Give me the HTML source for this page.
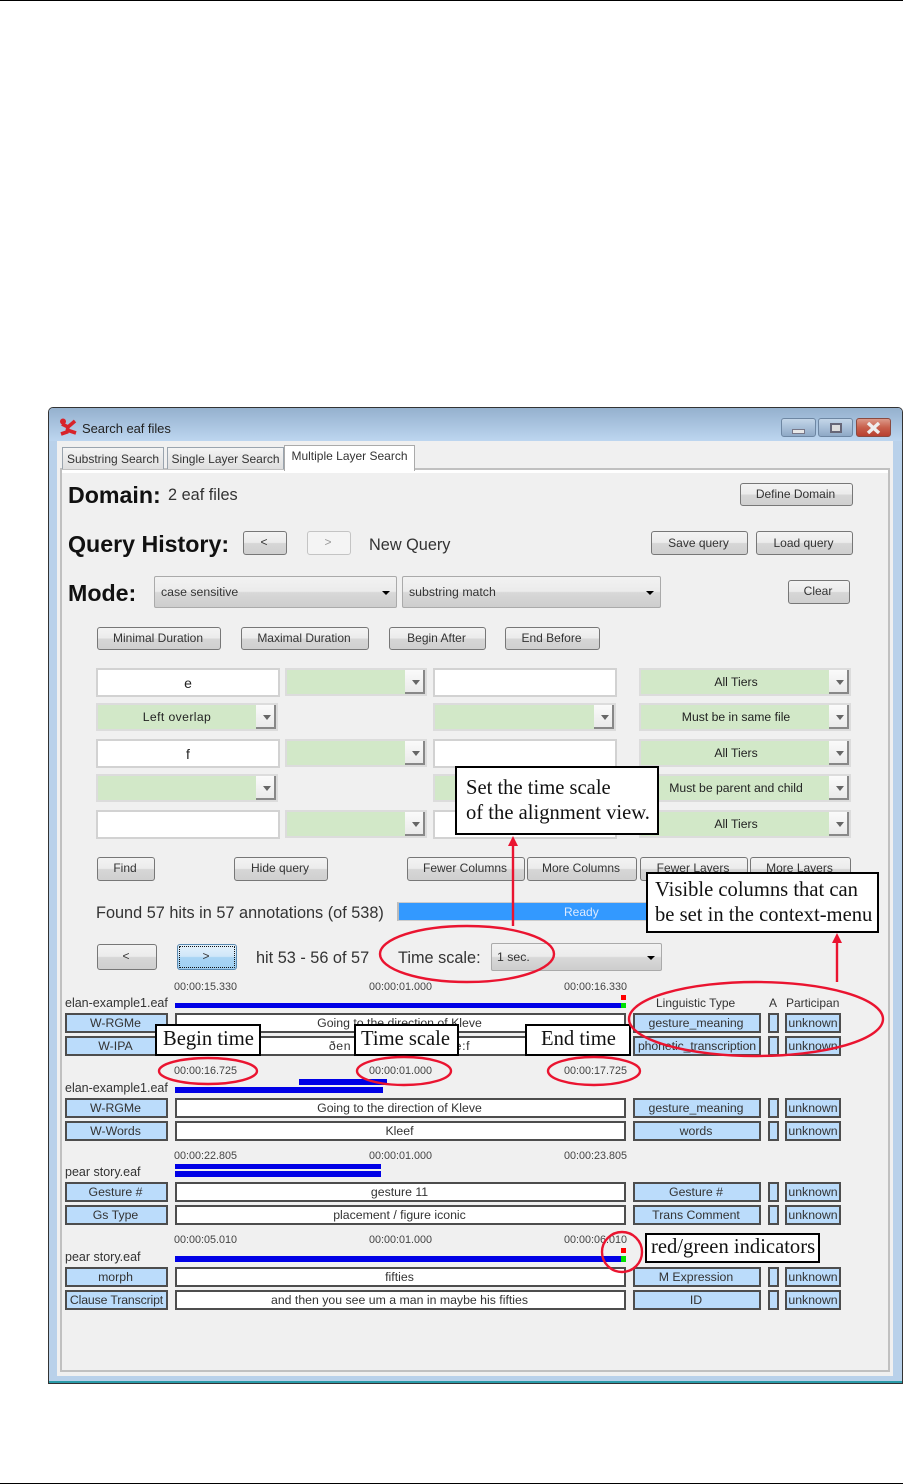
<!DOCTYPE html>
<html><head><meta charset="utf-8"><style>
html,body{margin:0;padding:0;background:#fff}
#p{position:relative;width:903px;height:1484px;overflow:hidden;background:#fff;font:12px "Liberation Sans",sans-serif;color:#222;filter:blur(.3px)}
#p div{position:absolute;box-sizing:border-box;white-space:nowrap}
.b{display:flex;align-items:center;justify-content:center;border:1px solid #777;border-radius:3px;background:linear-gradient(#f3f3f3 0,#ebebeb 48%,#d6d6d6 52%,#cfcfcf 100%);color:#333;font-size:12px;padding:0 2px 2px 0}
.s{border:1px solid #aaa;border-radius:2px;background:linear-gradient(#f2f2f2 0,#ebebeb 48%,#d8d8d8 52%,#cdcdcd 100%);padding-left:6px;display:flex;align-items:center;color:#333;font-size:12.3px}
.s:after{content:"";position:absolute;right:6px;top:50%;margin-top:-1px;border:4px solid transparent;border-top:4px solid #000;border-bottom:0}
.i{background:#fff;border:2px solid #d2d2d2;display:flex;align-items:center;justify-content:center;font-size:14px;color:#222}
.g{background:#d2e8c8;border:2px solid #dcdcdc;display:flex;align-items:center;justify-content:center;padding-right:18px;color:#222;font-size:12.2px}
.g:after{content:"";position:absolute;right:0;top:0;bottom:0;width:18px;background:linear-gradient(#fafafa,#eaeaea);border-right:2px solid #888;border-bottom:2px solid #888}
.g:before{content:"";position:absolute;z-index:1;right:5px;top:50%;margin-top:-2px;border:4px solid transparent;border-top:5px solid #666;border-bottom:0}
.l,.w{display:flex;align-items:center;justify-content:center;border:2px solid #4d4d4d;color:#333;height:20px;font-size:12.3px;padding-right:2px}
.l{background:#bbdcfb}
.w{background:#fff}
.t{font-size:10.8px;color:#444}
.f{color:#333;font-size:12.5px}
.f2{color:#333;font-size:12px}
.h{font-weight:bold;font-size:23.2px;color:#111}
.n{font-size:16.3px;color:#333}
.c{background:#fff;border:2px solid #000;font-family:"Liberation Serif",serif;font-size:20.6px;color:#111;line-height:25px;z-index:5}
.tab{display:flex;align-items:center;justify-content:center;border:1px solid #9aa4ae;border-bottom:0;background:linear-gradient(#f4f4f4,#dedede);color:#333;font-size:12px}
.bl{background:#0000e6}
</style></head><body><div id="p">
<div style="left:0;top:0;width:903px;height:1px;background:#000"></div>
<div style="left:0;top:1483px;width:903px;height:1px;background:#000"></div>

<!-- window -->
<div style="left:48px;top:407px;width:855px;height:977px;background:#b9d1ea;border:1px solid #333;border-radius:5px 5px 0 0"></div>
<div style="left:49px;top:408px;width:853px;height:33px;background:linear-gradient(#95b1ce,#bdd6f0);border-radius:4px 4px 0 0"></div>
<div style="left:49px;top:1381px;width:853px;height:2px;background:#2a9aa8"></div>
<div style="left:57px;top:441px;width:836px;height:935px;background:#f0f0f0"></div>
<svg style="position:absolute;left:59px;top:418px" width="20" height="19" viewBox="0 0 20 19"><path d="M3 6 L9 9 L16 3 M9 9 L8 14 L2 16 M8 12 L17 15" stroke="#d8232a" stroke-width="3.6" fill="none"/><circle cx="4" cy="3.5" r="3" fill="#d8232a"/></svg>
<div style="left:82px;top:421px;font-size:13px;color:#222;letter-spacing:-.05px">Search eaf files</div>
<!-- window controls -->
<div style="left:781px;top:418px;width:35px;height:19px;border:1px solid #6e87a3;border-radius:3px;background:linear-gradient(#c4d6e8,#a9c0d8 50%,#8fa9c6)"></div>
<div style="left:792px;top:429px;width:13px;height:5px;background:#e8e8e8;border:1px solid #778"></div>
<div style="left:818px;top:418px;width:35px;height:19px;border:1px solid #6e87a3;border-radius:3px;background:linear-gradient(#c4d6e8,#a9c0d8 50%,#8fa9c6)"></div>
<div style="left:830px;top:423px;width:12px;height:10px;background:#ddd;border:2px solid #667"></div>
<div style="left:856px;top:418px;width:35px;height:19px;border:1px solid #8a4a40;border-radius:3px;background:linear-gradient(#dc9a8a,#c8604c 50%,#b84030)"></div>
<svg style="position:absolute;left:866px;top:422px" width="15" height="12"><path d="M2 1 L13 11 M13 1 L2 11" stroke="#eee" stroke-width="3.4"/></svg>

<!-- tabs & panel -->
<div style="left:60px;top:468px;width:830px;height:904px;border:2px solid #c0c0c0;background:#f0f0f0;box-shadow:inset 0 3px 0 #fff"></div>
<div class="tab" style="left:62px;top:447px;width:102px;height:22px">Substring Search</div>
<div class="tab" style="left:167px;top:447px;width:117px;height:22px">Single Layer Search</div>
<div class="tab" style="left:284px;top:445px;width:131px;height:26px;background:#fff;padding-bottom:5px;border-color:#aaa;border-bottom:0">Multiple Layer Search</div>

<div class="h" style="left:68px;top:482px">Domain:</div>
<div class="n" style="left:168px;top:486px">2 eaf files</div>
<div class="b" style="left:740px;top:483px;width:113px;height:23px">Define Domain</div>

<div class="h" style="left:68px;top:531px">Query History:</div>
<div class="b" style="left:243px;top:531px;width:44px;height:24px">&lt;</div>
<div class="b" style="left:307px;top:531px;width:44px;height:24px;background:#f4f4f4;border-color:#c4c4c4;color:#999">&gt;</div>
<div class="n" style="left:369px;top:536px">New Query</div>
<div class="b" style="left:651px;top:531px;width:97px;height:24px;padding-bottom:0">Save query</div>
<div class="b" style="left:756px;top:531px;width:97px;height:24px;padding-bottom:0">Load query</div>

<div class="h" style="left:68px;top:580px">Mode:</div>
<div class="s" style="left:154px;top:576px;width:243px;height:32px">case sensitive</div>
<div class="s" style="left:402px;top:576px;width:259px;height:32px">substring match</div>
<div class="b" style="left:788px;top:580px;width:62px;height:24px">Clear</div>

<div class="b" style="left:97px;top:627px;width:124px;height:23px">Minimal Duration</div>
<div class="b" style="left:241px;top:627px;width:128px;height:23px">Maximal Duration</div>
<div class="b" style="left:389px;top:627px;width:97px;height:23px">Begin After</div>
<div class="b" style="left:505px;top:627px;width:95px;height:23px">End Before</div>

<div class="i" style="left:96px;top:668px;width:184px;height:29px">e</div>
<div class="g" style="left:285px;top:668px;width:142px;height:28px"></div>
<div class="i" style="left:433px;top:668px;width:184px;height:29px"></div>
<div class="g" style="left:639px;top:668px;width:212px;height:28px">All Tiers</div>

<div class="g" style="left:96px;top:703px;width:182px;height:28px;letter-spacing:.4px;padding-right:20px">Left overlap</div>
<div class="g" style="left:433px;top:703px;width:183px;height:28px"></div>
<div class="g" style="left:639px;top:703px;width:212px;height:28px">Must be in same file</div>

<div class="i" style="left:96px;top:739px;width:184px;height:29px">f</div>
<div class="g" style="left:285px;top:739px;width:142px;height:28px"></div>
<div class="i" style="left:433px;top:739px;width:184px;height:29px"></div>
<div class="g" style="left:639px;top:739px;width:212px;height:28px">All Tiers</div>

<div class="g" style="left:96px;top:774px;width:182px;height:28px"></div>
<div class="g" style="left:433px;top:774px;width:183px;height:28px"></div>
<div class="g" style="left:639px;top:774px;width:212px;height:28px">Must be parent and child</div>

<div class="i" style="left:96px;top:810px;width:184px;height:29px"></div>
<div class="g" style="left:285px;top:810px;width:142px;height:28px"></div>
<div class="i" style="left:433px;top:810px;width:184px;height:29px"></div>
<div class="g" style="left:639px;top:810px;width:212px;height:28px">All Tiers</div>

<div class="b" style="left:97px;top:857px;width:58px;height:24px">Find</div>
<div class="b" style="left:234px;top:857px;width:94px;height:24px">Hide query</div>
<div class="b" style="left:407px;top:857px;width:118px;height:24px">Fewer Columns</div>
<div class="b" style="left:527px;top:857px;width:110px;height:24px">More Columns</div>
<div class="b" style="left:640px;top:857px;width:108px;height:24px">Fewer Layers</div>
<div class="b" style="left:750px;top:857px;width:101px;height:24px">More Layers</div>

<div class="n" style="left:96px;top:904px">Found 57 hits in 57 annotations (of 538)</div>
<div style="left:397px;top:902px;width:255px;height:19px;background:#3399ff;border:1px solid #ccc;border-left:2px solid #bbb;color:#dbeaff;display:flex;align-items:center;justify-content:flex-start;padding-left:165px">Ready</div>

<div class="b" style="left:97px;top:944px;width:60px;height:26px">&lt;</div>
<div class="b" style="left:177px;top:944px;width:60px;height:26px;border-color:#5c8ab0;background:linear-gradient(#e4f2fc,#cfe6f8 48%,#a8d4f4 52%,#a0d0f2);outline:1px dotted #111;outline-offset:-3px">&gt;</div>
<div class="n" style="left:256px;top:949px">hit 53 - 56 of 57</div>
<div class="n" style="left:398px;top:949px">Time scale:</div>
<div class="s" style="left:491px;top:943px;width:171px;height:28px;padding-left:5px">1 sec.</div>

<!-- block 1 -->
<div class="t" style="left:174px;top:981px">00:00:15.330</div>
<div class="t" style="left:369px;top:981px">00:00:01.000</div>
<div class="t" style="left:564px;top:981px">00:00:16.330</div>
<div class="f" style="left:65px;top:996px">elan-example1.eaf</div>
<div class="bl" style="left:175px;top:1003px;width:446px;height:5px"></div>
<div style="left:621px;top:1003px;width:5px;height:5px;background:#00e000"></div>
<div style="left:621px;top:995px;width:5px;height:5px;background:#f00"></div>
<div class="f2" style="left:656px;top:996px">Linguistic Type</div>
<div class="f2" style="left:769px;top:996px">A</div>
<div class="f2" style="left:786px;top:996px">Participan</div>
<div class="l" style="left:65px;top:1013px;width:103px">W-RGMe</div>
<div class="w" style="left:175px;top:1013px;width:451px">Going to the direction of Kleve</div>
<div class="l" style="left:633px;top:1013px;width:128px">gesture_meaning</div>
<div class="l" style="left:768px;top:1013px;width:11px"></div>
<div class="l" style="left:785px;top:1013px;width:56px;padding:0">unknown</div>
<div class="l" style="left:65px;top:1036px;width:103px">W-IPA</div>
<div class="w" style="left:175px;top:1036px;width:451px;letter-spacing:.6px">ðen ðə dɪrɛkʃən ɒv kle:f</div>
<div class="l" style="left:633px;top:1036px;width:128px;letter-spacing:-.1px;padding:0">phonetic_transcription</div>
<div class="l" style="left:768px;top:1036px;width:11px"></div>
<div class="l" style="left:785px;top:1036px;width:56px;padding:0">unknown</div>

<!-- block 2 -->
<div class="t" style="left:174px;top:1065px">00:00:16.725</div>
<div class="t" style="left:369px;top:1065px">00:00:01.000</div>
<div class="t" style="left:564px;top:1065px">00:00:17.725</div>
<div class="f" style="left:65px;top:1081px">elan-example1.eaf</div>
<div class="bl" style="left:299px;top:1079px;width:88px;height:6px"></div>
<div class="bl" style="left:175px;top:1087px;width:208px;height:6px"></div>
<div class="l" style="left:65px;top:1098px;width:103px">W-RGMe</div>
<div class="w" style="left:175px;top:1098px;width:451px">Going to the direction of Kleve</div>
<div class="l" style="left:633px;top:1098px;width:128px">gesture_meaning</div>
<div class="l" style="left:768px;top:1098px;width:11px"></div>
<div class="l" style="left:785px;top:1098px;width:56px;padding:0">unknown</div>
<div class="l" style="left:65px;top:1121px;width:103px">W-Words</div>
<div class="w" style="left:175px;top:1121px;width:451px">Kleef</div>
<div class="l" style="left:633px;top:1121px;width:128px">words</div>
<div class="l" style="left:768px;top:1121px;width:11px"></div>
<div class="l" style="left:785px;top:1121px;width:56px;padding:0">unknown</div>

<!-- block 3 -->
<div class="t" style="left:174px;top:1150px">00:00:22.805</div>
<div class="t" style="left:369px;top:1150px">00:00:01.000</div>
<div class="t" style="left:564px;top:1150px">00:00:23.805</div>
<div class="f" style="left:65px;top:1165px">pear story.eaf</div>
<div class="bl" style="left:175px;top:1164px;width:206px;height:5px"></div>
<div class="bl" style="left:175px;top:1171px;width:206px;height:6px"></div>
<div class="l" style="left:65px;top:1182px;width:103px">Gesture #</div>
<div class="w" style="left:175px;top:1182px;width:451px">gesture 11</div>
<div class="l" style="left:633px;top:1182px;width:128px">Gesture #</div>
<div class="l" style="left:768px;top:1182px;width:11px"></div>
<div class="l" style="left:785px;top:1182px;width:56px;padding:0">unknown</div>
<div class="l" style="left:65px;top:1205px;width:103px">Gs Type</div>
<div class="w" style="left:175px;top:1205px;width:451px">placement / figure iconic</div>
<div class="l" style="left:633px;top:1205px;width:128px">Trans Comment</div>
<div class="l" style="left:768px;top:1205px;width:11px"></div>
<div class="l" style="left:785px;top:1205px;width:56px;padding:0">unknown</div>

<!-- block 4 -->
<div class="t" style="left:174px;top:1234px">00:00:05.010</div>
<div class="t" style="left:369px;top:1234px">00:00:01.000</div>
<div class="t" style="left:564px;top:1234px">00:00:06.010</div>
<div class="f" style="left:65px;top:1250px">pear story.eaf</div>
<div class="bl" style="left:175px;top:1256px;width:446px;height:6px"></div>
<div style="left:621px;top:1256px;width:5px;height:6px;background:#00e000"></div>
<div style="left:621px;top:1248px;width:5px;height:5px;background:#f00"></div>
<div class="l" style="left:65px;top:1267px;width:103px">morph</div>
<div class="w" style="left:175px;top:1267px;width:451px">fifties</div>
<div class="l" style="left:633px;top:1267px;width:128px">M Expression</div>
<div class="l" style="left:768px;top:1267px;width:11px"></div>
<div class="l" style="left:785px;top:1267px;width:56px;padding:0">unknown</div>
<div class="l" style="left:65px;top:1290px;width:103px;letter-spacing:-.15px;padding:0">Clause Transcript</div>
<div class="w" style="left:175px;top:1290px;width:451px">and then you see um a man in maybe his fifties</div>
<div class="l" style="left:633px;top:1290px;width:128px">ID</div>
<div class="l" style="left:768px;top:1290px;width:11px"></div>
<div class="l" style="left:785px;top:1290px;width:56px;padding:0">unknown</div>

<!-- callouts -->
<div class="c" style="left:455px;top:766px;width:204px;height:69px;padding:8px 0 0 9px">Set the time scale<br>of the alignment view.</div>
<div class="c" style="left:646px;top:872px;width:233px;height:61px;padding:4px 0 0 7px">Visible columns that can<br>be set in the context-menu</div>
<div class="c" style="left:155px;top:1024px;width:106px;height:32px;padding:1px 0 0 6px">Begin time</div>
<div class="c" style="left:354px;top:1024px;width:105px;height:32px;padding:1px 0 0 5px">Time scale</div>
<div class="c" style="left:525px;top:1024px;width:106px;height:32px;padding:1px 0 0 14px">End time</div>
<div class="c" style="left:645px;top:1233px;width:175px;height:30px;padding:0 0 0 4px">red/green indicators</div>

<!-- annotation lines -->
<svg style="position:absolute;left:0;top:0;z-index:6" width="903" height="1484" fill="none" stroke="#ea1430" stroke-width="2.4">
<ellipse cx="467" cy="954" rx="87" ry="28"/>
<ellipse cx="208" cy="1071" rx="49" ry="13"/>
<ellipse cx="404" cy="1071" rx="47" ry="14"/>
<ellipse cx="594" cy="1071" rx="46" ry="14"/>
<ellipse cx="756" cy="1019" rx="127" ry="37"/>
<circle cx="622" cy="1252" r="20"/>
<path d="M513 926V845M837 982V943"/>
<path d="M513 836l-5 10h10zM837 933l-5 10h10z" fill="#ea1430" stroke="none"/>
</svg>
</div></body></html>
